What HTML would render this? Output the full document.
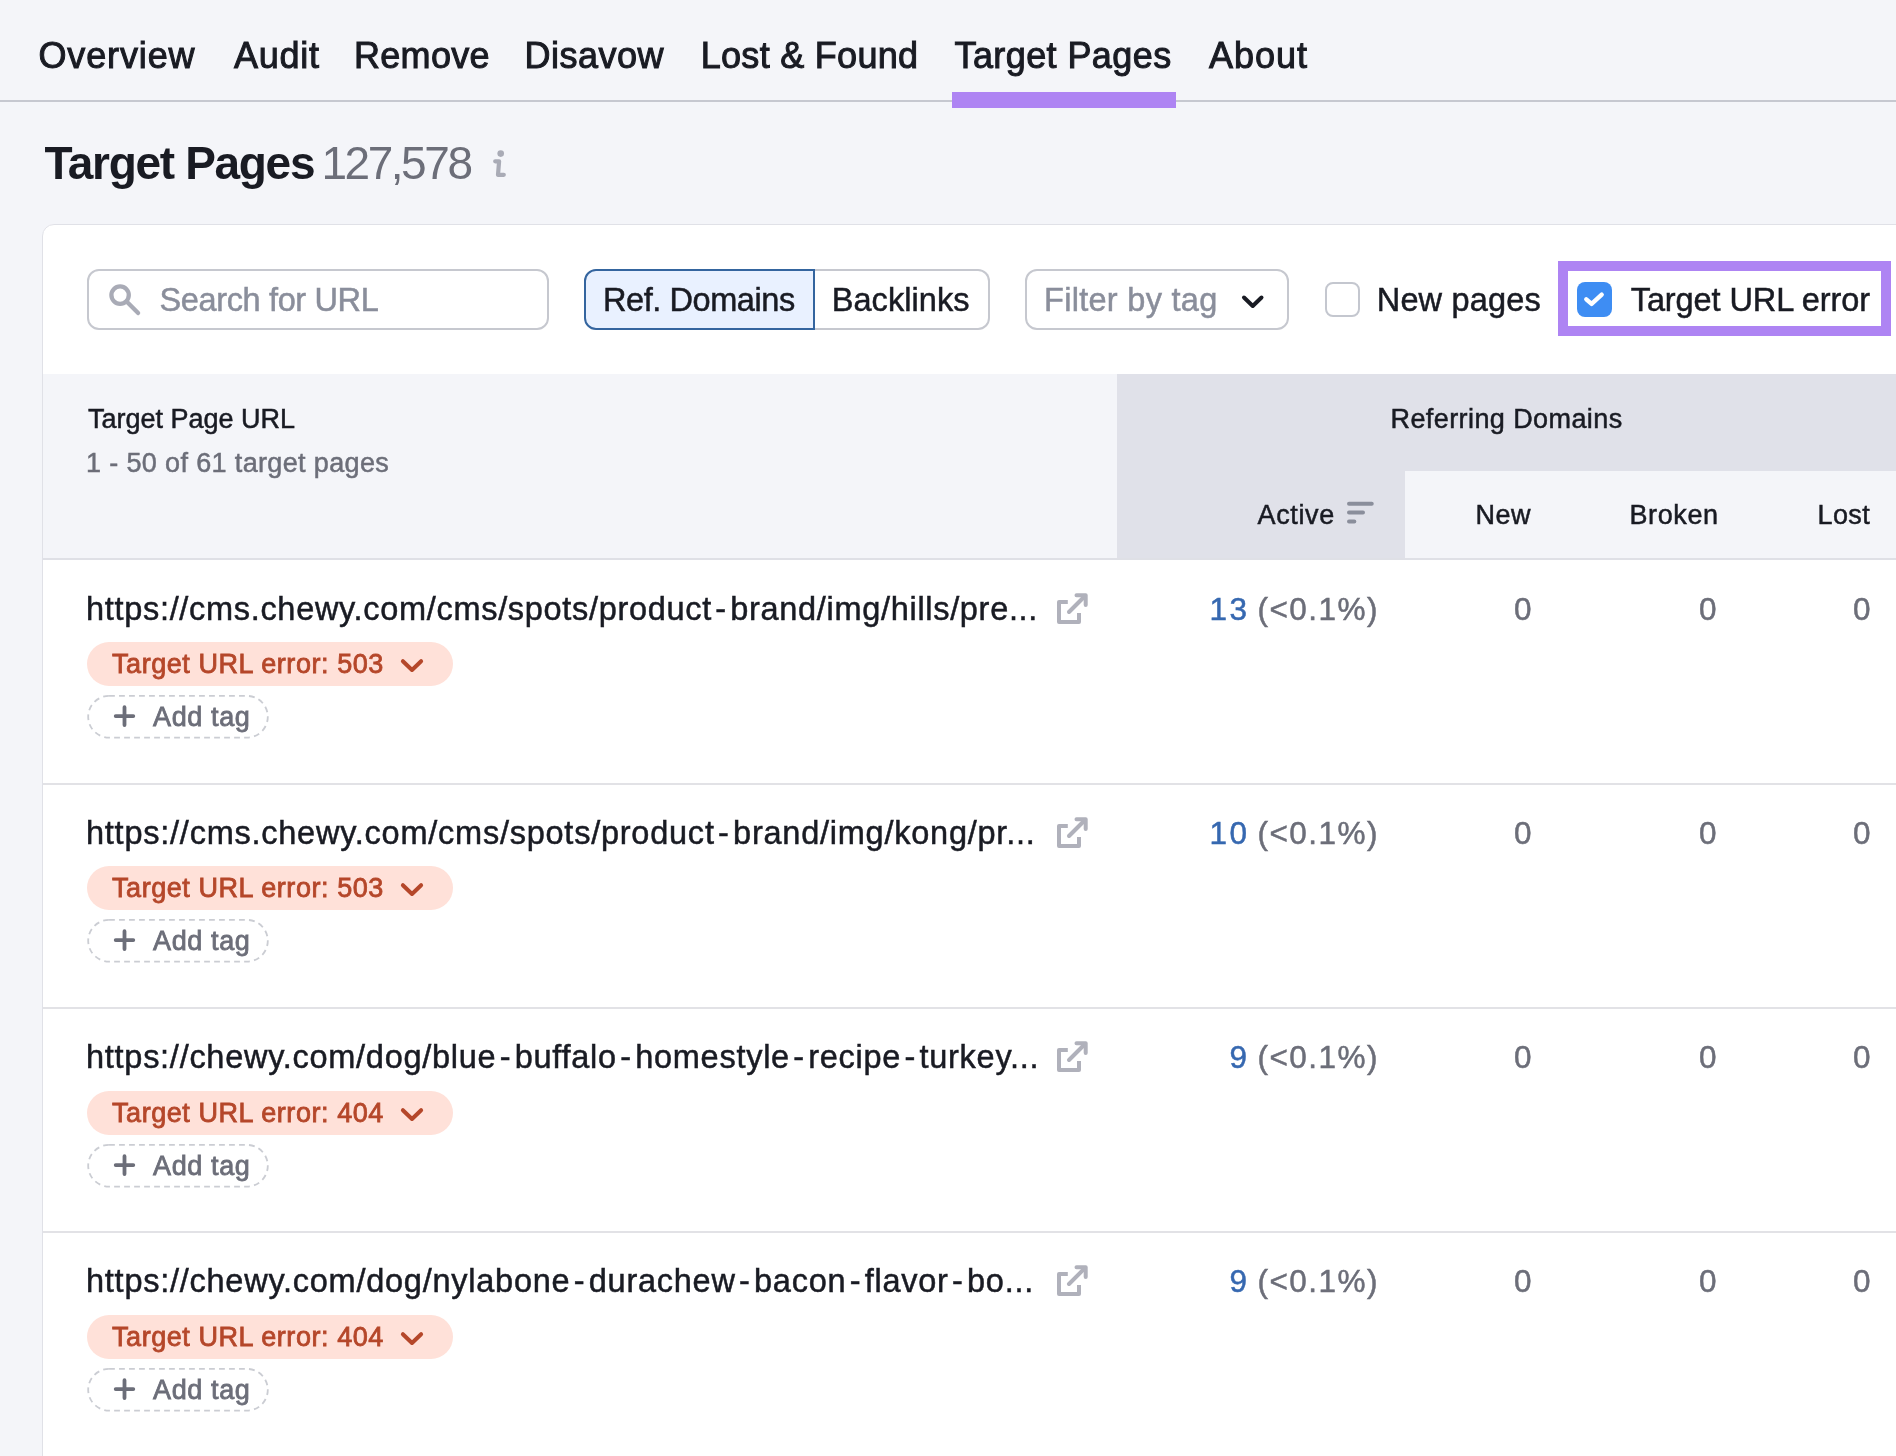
<!DOCTYPE html>
<html lang="en"><head><meta charset="utf-8"><title>Target Pages</title>
<style>
*{box-sizing:border-box;margin:0;padding:0}
html,body{width:1896px;height:1456px;overflow:hidden}
body{background:#f4f5f9;font-family:"Liberation Sans",sans-serif;color:#191b23;position:relative}
.t{-webkit-text-stroke:.5px currentColor;position:absolute;line-height:1;white-space:pre;font-weight:normal;font-style:normal;text-decoration:none}
.abs{position:absolute}
svg{position:absolute;overflow:visible}
#app{position:absolute;left:0;top:0;width:1896px;height:1456px;overflow:hidden;will-change:transform}
/* tabs */
.tabs .line{position:absolute;left:0;top:100px;width:1896px;height:2px;background:#c6c8d0}
.tabs a{font-size:36px;color:#191b23;-webkit-text-stroke:1px currentColor}
.tabs .bar{position:absolute;left:951.5px;top:92px;width:224.5px;height:15.5px;background:#ae84f3}
/* title */
h1.t{font-size:46px;font-weight:bold;-webkit-text-stroke:0}
.count{font-size:46px;color:#6c6e79;-webkit-text-stroke:0}
/* card */
.card{position:absolute;left:42px;top:224px;width:1900px;height:1300px;background:#fff;border:1px solid #e0e1e7;border-radius:12px}
.b{font-size:32.5px}
.h{font-size:27px}
.ph{color:#8a8e9b}
.gray{color:#6c6e79}
.blue{color:#3668b0}
.num{font-size:31.5px}
.box{position:absolute;top:269px;height:61px;border:2px solid #c6c8cf;border-radius:12px;background:#fff}
.seg-a{left:584px;width:231px;border-color:#34659f;background:#e9f1ff;border-radius:12px 0 0 12px}
.seg-b{left:813px;width:177px;border-left:0;border-radius:0 12px 12px 0}
.cb{position:absolute;left:1325px;top:282px;width:35px;height:35px;border:2px solid #c4c7cf;border-radius:8px;background:#fff}
.cb.on{left:1577px;border:0;background:#3e8df3}
.hl{position:absolute;left:1558px;top:261px;width:333px;height:75px;border:10px solid #ae84f3}
.thead{position:absolute;left:43px;top:374px;width:1853px;height:186px;background:#f4f5f9;border-bottom:2px solid #dfe0e6}
.thead .grp{position:absolute;left:1074px;top:0;width:779px;height:184px;background:#e0e1e9}
.thead .sub{position:absolute;left:1362px;top:97px;width:491px;height:87px;background:#f4f5f9}
.sep{position:absolute;left:43px;width:1853px;height:2px;background:#e2e2e6}
.pill{position:absolute;left:87px;width:366px;height:43.5px;border-radius:22px;background:#ffe1d9}
.err{color:#b5472a;-webkit-text-stroke:.8px currentColor}
.add{color:#6c6e79;-webkit-text-stroke:.8px currentColor}
.u i{font-style:normal;padding:0 3.4px}
</style></head>
<body><div id="app">
<nav class="tabs"><div class="line"></div><div class="bar"></div>
<a class="t " style="left:38.50px;top:38px;letter-spacing:0.86px">Overview</a>
<a class="t " style="left:234.00px;top:38px;letter-spacing:0.75px">Audit</a>
<a class="t " style="left:354.00px;top:38px;letter-spacing:0.30px">Remove</a>
<a class="t " style="left:524.50px;top:38px;letter-spacing:0.50px">Disavow</a>
<a class="t " style="left:700.75px;top:38px;letter-spacing:0.29px">Lost &amp; Found</a>
<a class="t " style="left:954.50px;top:38px;letter-spacing:0.41px">Target Pages</a>
<a class="t " style="left:1209.00px;top:38px;letter-spacing:1.00px">About</a>
</nav>
<header><h1 class="t " style="left:44.40px;top:140px;letter-spacing:-1.31px">Target Pages</h1><span class="t count" style="left:321.40px;top:140px;letter-spacing:-2.45px">127,578</span>
<svg width="20" height="34" style="left:490px;top:146px" viewBox="490 146 20 34"><circle cx="500.7" cy="153.6" r="3.3" fill="#a9abb6"/><path d="M495.2 161.3H499.1L498 174.8H503.8" fill="none" stroke="#a9abb6" stroke-width="4.2" stroke-linecap="round" stroke-linejoin="round"/></svg>
</header>
<main><div class="card"></div>
<section class="toolbar">
<div class="box" style="left:87px;width:462px"></div>
<svg width="36" height="36" style="left:106px;top:281px" viewBox="106 281 36 36"><circle cx="120.1" cy="295.1" r="8.7" fill="none" stroke="#a9abb6" stroke-width="4.3"/><path d="M126.6 301.6L138.1 313.1" stroke="#a9abb6" stroke-width="4.3" stroke-linecap="round"/></svg>
<span class="t b ph" style="left:159.50px;top:284px;letter-spacing:-0.36px">Search for URL</span>
<div class="box seg-b"></div><div class="box seg-a"></div>
<span class="t b" style="left:603.00px;top:284px;letter-spacing:-0.43px">Ref. Domains</span><span class="t b" style="left:831.75px;top:284px;letter-spacing:0.06px">Backlinks</span>
<div class="box" style="left:1025px;width:264px"></div>
<span class="t b ph" style="left:1044.00px;top:284px;letter-spacing:0.29px">Filter by tag</span>
<svg width="30" height="20" style="left:1238px;top:292px" viewBox="1238 292 30 20"><path d="M1244 297.5L1252.75 306L1261.5 297.5" fill="none" stroke="#191b23" stroke-width="4" stroke-linecap="round" stroke-linejoin="round"/></svg>
<div class="cb"></div><span class="t b" style="left:1376.75px;top:284px;letter-spacing:0.16px">New pages</span>
<div class="hl"></div><div class="cb on"></div>
<svg width="35" height="35" style="left:1577px;top:282px" viewBox="1577 282 35 35"><path d="M1586.3 299.3L1591.6 303.9L1601.7 294.7" fill="none" stroke="#fff" stroke-width="4.4" stroke-linecap="round" stroke-linejoin="round"/></svg>
<span class="t b" style="left:1630.75px;top:284px;letter-spacing:-0.10px">Target URL error</span>
</section>
<section class="table"><div class="thead"><div class="grp"></div><div class="sub"></div></div>
<span class="t h" style="left:88.00px;top:406px;letter-spacing:0.00px">Target Page URL</span>
<span class="t h gray" style="left:86.00px;top:450px;letter-spacing:0.36px">1 - 50 of 61 target pages</span>
<span class="t h" style="left:1390.50px;top:406px;letter-spacing:0.41px">Referring Domains</span>
<span class="t h" style="left:1257.50px;top:502px;letter-spacing:0.65px">Active</span>
<span class="t h" style="left:1475.50px;top:502px;letter-spacing:0.50px">New</span>
<span class="t h" style="left:1629.50px;top:502px;letter-spacing:0.60px">Broken</span>
<span class="t h" style="left:1817.50px;top:502px;letter-spacing:0.42px">Lost</span>
<svg width="30" height="26" style="left:1345px;top:500px" viewBox="1345 500 30 26"><g stroke="#8a8e9b" stroke-width="4" stroke-linecap="round"><path d="M1349 503.75H1371.75"/><path d="M1349 512.5H1363"/><path d="M1349 521.5H1354.3"/></g></svg>
<div class="row" style="position:absolute;left:0;top:0px">
<span class="t b u" style="left:86.00px;top:593px;letter-spacing:0.69px">https://cms.chewy.com/cms/spots/product<i>-</i>brand/img/hills/pre...</span>
<svg width="34" height="34" style="left:1055px;top:591px" viewBox="-2 -2 34 34"><g fill="none" stroke="#b0b1bb" stroke-width="4" stroke-linejoin="round"><path d="M10.8 9H2V29H22V20"/><path d="M12 19L28 3" stroke-linecap="round"/><path d="M19.5 2.2H28.7V12" stroke-linecap="round"/></g></svg>
<div class="pill" style="top:642px"></div>
<span class="t h err" style="left:112.00px;top:651px;letter-spacing:0.56px">Target URL error: 503</span>
<svg width="30" height="20" style="left:398px;top:655px" viewBox="398 655 30 20"><path d="M402.9 661.2L412 670L421.1 661.2" fill="none" stroke="#b5472a" stroke-width="4" stroke-linecap="round" stroke-linejoin="round"/></svg>
<svg width="184" height="46" style="left:86px;top:694px" viewBox="86 694 184 46"><rect x="88.2" y="695.9" width="179.6" height="41.7" rx="20.85" fill="none" stroke="#cbcdd3" stroke-width="1.8" stroke-dasharray="5.8 4.2"/><path d="M115.7 716.1H133.3M124.5 707.2V725" stroke="#6c6e79" stroke-width="3.8" stroke-linecap="round"/></svg>
<span class="t h add" style="left:153.00px;top:704px;letter-spacing:0.62px">Add tag</span>
<span class="t num blue" style="left:1209.50px;top:594px;letter-spacing:2.50px">13</span><span class="t num gray" style="left:1257.50px;top:594px;letter-spacing:1.48px">(&lt;0.1%)</span><span class="t num gray" style="left:1514.00px;top:594px;letter-spacing:0.00px">0</span><span class="t num gray" style="left:1699.00px;top:594px;letter-spacing:0.00px">0</span><span class="t num gray" style="left:1853.00px;top:594px;letter-spacing:0.00px">0</span>
<div class="sep" style="top:783px"></div>
</div>
<div class="row" style="position:absolute;left:0;top:224px">
<span class="t b u" style="left:86.00px;top:593px;letter-spacing:0.76px">https://cms.chewy.com/cms/spots/product<i>-</i>brand/img/kong/pr...</span>
<svg width="34" height="34" style="left:1055px;top:591px" viewBox="-2 -2 34 34"><g fill="none" stroke="#b0b1bb" stroke-width="4" stroke-linejoin="round"><path d="M10.8 9H2V29H22V20"/><path d="M12 19L28 3" stroke-linecap="round"/><path d="M19.5 2.2H28.7V12" stroke-linecap="round"/></g></svg>
<div class="pill" style="top:642px"></div>
<span class="t h err" style="left:112.00px;top:651px;letter-spacing:0.56px">Target URL error: 503</span>
<svg width="30" height="20" style="left:398px;top:655px" viewBox="398 655 30 20"><path d="M402.9 661.2L412 670L421.1 661.2" fill="none" stroke="#b5472a" stroke-width="4" stroke-linecap="round" stroke-linejoin="round"/></svg>
<svg width="184" height="46" style="left:86px;top:694px" viewBox="86 694 184 46"><rect x="88.2" y="695.9" width="179.6" height="41.7" rx="20.85" fill="none" stroke="#cbcdd3" stroke-width="1.8" stroke-dasharray="5.8 4.2"/><path d="M115.7 716.1H133.3M124.5 707.2V725" stroke="#6c6e79" stroke-width="3.8" stroke-linecap="round"/></svg>
<span class="t h add" style="left:153.00px;top:704px;letter-spacing:0.62px">Add tag</span>
<span class="t num blue" style="left:1209.50px;top:594px;letter-spacing:2.50px">10</span><span class="t num gray" style="left:1257.50px;top:594px;letter-spacing:1.48px">(&lt;0.1%)</span><span class="t num gray" style="left:1514.00px;top:594px;letter-spacing:0.00px">0</span><span class="t num gray" style="left:1699.00px;top:594px;letter-spacing:0.00px">0</span><span class="t num gray" style="left:1853.00px;top:594px;letter-spacing:0.00px">0</span>
<div class="sep" style="top:783px"></div>
</div>
<div class="row" style="position:absolute;left:0;top:448px">
<span class="t b u" style="left:86.00px;top:593px;letter-spacing:0.73px">https://chewy.com/dog/blue<i>-</i>buffalo<i>-</i>homestyle<i>-</i>recipe<i>-</i>turkey...</span>
<svg width="34" height="34" style="left:1055px;top:591px" viewBox="-2 -2 34 34"><g fill="none" stroke="#b0b1bb" stroke-width="4" stroke-linejoin="round"><path d="M10.8 9H2V29H22V20"/><path d="M12 19L28 3" stroke-linecap="round"/><path d="M19.5 2.2H28.7V12" stroke-linecap="round"/></g></svg>
<div class="pill" style="top:643px"></div>
<span class="t h err" style="left:112.00px;top:652px;letter-spacing:0.56px">Target URL error: 404</span>
<svg width="30" height="20" style="left:398px;top:656px" viewBox="398 655 30 20"><path d="M402.9 661.2L412 670L421.1 661.2" fill="none" stroke="#b5472a" stroke-width="4" stroke-linecap="round" stroke-linejoin="round"/></svg>
<svg width="184" height="46" style="left:86px;top:695px" viewBox="86 694 184 46"><rect x="88.2" y="695.9" width="179.6" height="41.7" rx="20.85" fill="none" stroke="#cbcdd3" stroke-width="1.8" stroke-dasharray="5.8 4.2"/><path d="M115.7 716.1H133.3M124.5 707.2V725" stroke="#6c6e79" stroke-width="3.8" stroke-linecap="round"/></svg>
<span class="t h add" style="left:153.00px;top:705px;letter-spacing:0.62px">Add tag</span>
<span class="t num blue" style="left:1229.50px;top:594px;letter-spacing:0.00px">9</span><span class="t num gray" style="left:1257.50px;top:594px;letter-spacing:1.48px">(&lt;0.1%)</span><span class="t num gray" style="left:1514.00px;top:594px;letter-spacing:0.00px">0</span><span class="t num gray" style="left:1699.00px;top:594px;letter-spacing:0.00px">0</span><span class="t num gray" style="left:1853.00px;top:594px;letter-spacing:0.00px">0</span>
<div class="sep" style="top:783px"></div>
</div>
<div class="row" style="position:absolute;left:0;top:672px">
<span class="t b u" style="left:86.00px;top:593px;letter-spacing:0.75px">https://chewy.com/dog/nylabone<i>-</i>durachew<i>-</i>bacon<i>-</i>flavor<i>-</i>bo...</span>
<svg width="34" height="34" style="left:1055px;top:591px" viewBox="-2 -2 34 34"><g fill="none" stroke="#b0b1bb" stroke-width="4" stroke-linejoin="round"><path d="M10.8 9H2V29H22V20"/><path d="M12 19L28 3" stroke-linecap="round"/><path d="M19.5 2.2H28.7V12" stroke-linecap="round"/></g></svg>
<div class="pill" style="top:643px"></div>
<span class="t h err" style="left:112.00px;top:652px;letter-spacing:0.56px">Target URL error: 404</span>
<svg width="30" height="20" style="left:398px;top:656px" viewBox="398 655 30 20"><path d="M402.9 661.2L412 670L421.1 661.2" fill="none" stroke="#b5472a" stroke-width="4" stroke-linecap="round" stroke-linejoin="round"/></svg>
<svg width="184" height="46" style="left:86px;top:695px" viewBox="86 694 184 46"><rect x="88.2" y="695.9" width="179.6" height="41.7" rx="20.85" fill="none" stroke="#cbcdd3" stroke-width="1.8" stroke-dasharray="5.8 4.2"/><path d="M115.7 716.1H133.3M124.5 707.2V725" stroke="#6c6e79" stroke-width="3.8" stroke-linecap="round"/></svg>
<span class="t h add" style="left:153.00px;top:705px;letter-spacing:0.62px">Add tag</span>
<span class="t num blue" style="left:1229.50px;top:594px;letter-spacing:0.00px">9</span><span class="t num gray" style="left:1257.50px;top:594px;letter-spacing:1.48px">(&lt;0.1%)</span><span class="t num gray" style="left:1514.00px;top:594px;letter-spacing:0.00px">0</span><span class="t num gray" style="left:1699.00px;top:594px;letter-spacing:0.00px">0</span><span class="t num gray" style="left:1853.00px;top:594px;letter-spacing:0.00px">0</span>
</div>
</section></main></div></body></html>
